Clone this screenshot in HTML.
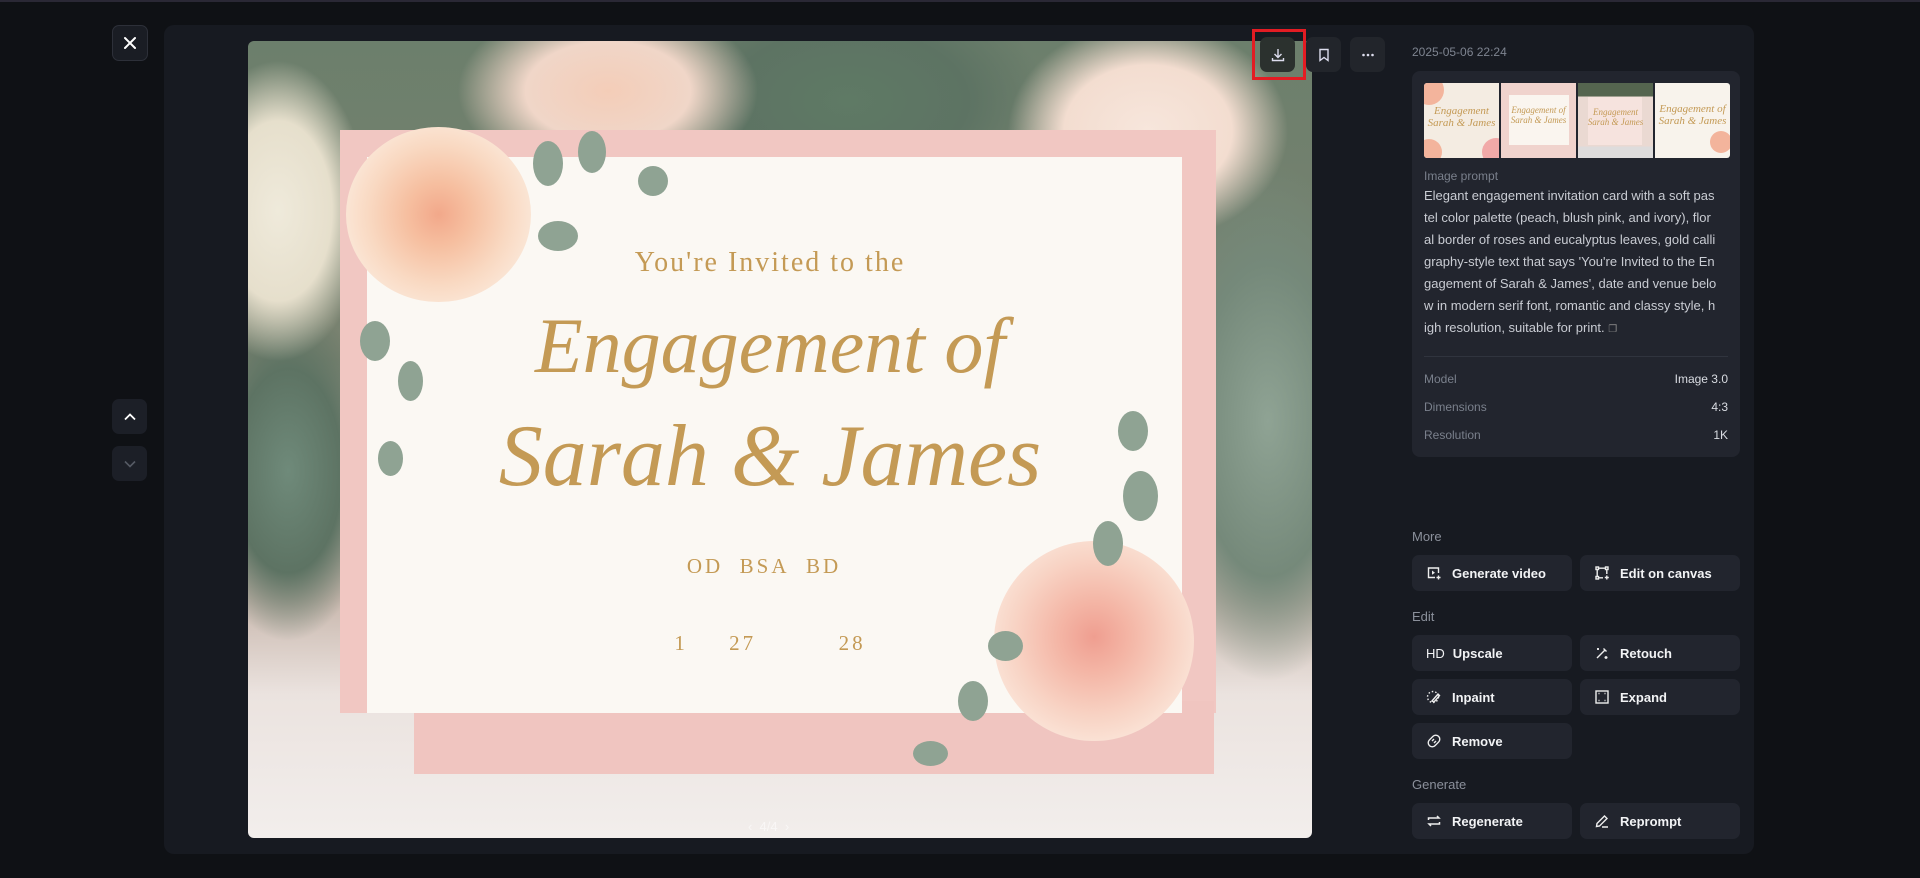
<!DOCTYPE html>
<html><head><meta charset="utf-8"><style>
*{box-sizing:border-box;margin:0;padding:0}
body{width:1920px;height:878px;background:#0f1115;font-family:"Liberation Sans",sans-serif;position:relative;overflow:hidden;color:#e6e8ec}
.topline{position:absolute;left:0;top:0;width:1920px;height:2px;background:#2a2835}
.sq{position:absolute;width:36px;height:36px;border-radius:7px;background:#1c1f27;display:flex;align-items:center;justify-content:center}
.panel{position:absolute;left:164px;top:25px;width:1590px;height:829px;background:#171a21;border-radius:10px}
.img{position:absolute;left:248px;top:41px;width:1064px;height:797px;border-radius:6px;overflow:hidden;
background:
radial-gradient(ellipse 90px 150px at 30px 170px,#efeadb 0,#e6dfcc 60%,rgba(230,223,204,0) 100%),
radial-gradient(ellipse 150px 90px at 360px 50px,#f4cdb8 0,#f0d6c8 55%,rgba(240,214,200,0) 100%),
radial-gradient(ellipse 140px 110px at 900px 90px,#f7e6dc 0,#f3ddd0 60%,rgba(243,221,208,0) 100%),
radial-gradient(ellipse 120px 260px at 1020px 380px,#8fa394 0,#75897a 60%,rgba(117,137,122,0) 100%),
radial-gradient(ellipse 200px 120px at 600px 60px,#5f7a65 0,#5d7363 60%,rgba(93,115,99,0) 100%),
radial-gradient(ellipse 90px 170px at 40px 430px,#6f8a7a 0,#5d7363 60%,rgba(93,115,99,0) 100%),
linear-gradient(180deg,#6c7f6c 0%,#7a8270 40%,#c9b8ae 70%,#ebe3df 82%,#f2eeec 100%)}
.env{position:absolute;left:92px;top:89px;width:876px;height:583px;background:#f1c7c2}
.env2{position:absolute;left:166px;top:660px;width:800px;height:73px;background:#f0c5c0}
.card{position:absolute;left:119px;top:116px;width:815px;height:556px;background:#fbf8f3}
.rose{position:absolute;border-radius:50%}
.leaf{position:absolute;border-radius:50%;background:#8fa393}
.t{position:absolute;width:100%;text-align:center;color:#c49a55}
.side{position:absolute;left:1412px}
.lbl{color:#8b909b;font-size:13px}
.btn{position:absolute;width:160px;height:36px;background:#22252e;border-radius:7px;display:flex;align-items:center;padding-left:14px;font-size:13px;font-weight:bold;color:#f2f3f5}
.btn svg{margin-right:10px}
.row{display:flex;justify-content:space-between;font-size:12px;position:absolute;left:12px;right:12px}
.row span:first-child{color:#7a808c}.row span:last-child{color:#d9dce2}
.th{width:75px;height:75px;position:relative;overflow:hidden}
.th i{position:absolute;border-radius:50%;background:#f3b49c}
.th b{position:absolute;left:0;right:0;text-align:center;color:#c49a55;font:italic 11px "Liberation Serif",serif}
</style></head><body>
<div class="topline"></div>
<div class="sq" style="left:112px;top:25px;border:1px solid #2d3039;background:#1a1d24"><svg width="16" height="16" viewBox="0 0 16 16"><path d="M3 3L13 13M13 3L3 13" stroke="#fff" stroke-width="2" stroke-linecap="round"/></svg></div>
<div class="sq" style="left:112px;top:399px;width:35px;height:35px"><svg width="16" height="16" viewBox="0 0 16 16"><path d="M3 10.5L8 5.5L13 10.5" stroke="#fff" stroke-width="1.8" fill="none"/></svg></div>
<div class="sq" style="left:112px;top:446px;width:35px;height:35px"><svg width="16" height="16" viewBox="0 0 16 16"><path d="M3 5.5L8 10.5L13 5.5" stroke="#555a64" stroke-width="1.6" fill="none"/></svg></div>
<div class="panel"></div>
<div class="img">
 <div class="env"></div>
 <div class="env2"></div>
 <div class="card"></div>
 <div class="rose" style="left:98px;top:86px;width:185px;height:175px;background:radial-gradient(circle at 50% 50%,#f2a88a 0,#f6bfa0 25%,#f9d9c2 55%,#fbeadc 80%,rgba(251,234,220,0) 100%)"></div>
 <div class="rose" style="left:746px;top:500px;width:200px;height:200px;background:radial-gradient(circle at 50% 48%,#ef9e90 0,#f4b6a6 25%,#f8d3c4 55%,#fbe8dc 80%,rgba(251,232,220,0) 100%)"></div>
 <div class="leaf" style="left:285px;top:100px;width:30px;height:45px"></div>
 <div class="leaf" style="left:330px;top:90px;width:28px;height:42px"></div>
 <div class="leaf" style="left:390px;top:125px;width:30px;height:30px"></div>
 <div class="leaf" style="left:290px;top:180px;width:40px;height:30px"></div>
 <div class="leaf" style="left:112px;top:280px;width:30px;height:40px"></div>
 <div class="leaf" style="left:150px;top:320px;width:25px;height:40px"></div>
 <div class="leaf" style="left:130px;top:400px;width:25px;height:35px"></div>
 <div class="leaf" style="left:875px;top:430px;width:35px;height:50px"></div>
 <div class="leaf" style="left:845px;top:480px;width:30px;height:45px"></div>
 <div class="leaf" style="left:710px;top:640px;width:30px;height:40px"></div>
 <div class="leaf" style="left:665px;top:700px;width:35px;height:25px"></div>
 <div class="leaf" style="left:740px;top:590px;width:35px;height:30px"></div>
 <div class="leaf" style="left:870px;top:370px;width:30px;height:40px"></div>
 <div class="t" style="top:206px;font-family:'Liberation Serif',serif;font-size:28px;letter-spacing:2px;left:-10px">You're Invited to the</div>
 <div class="t" style="top:260px;font-family:'Liberation Serif',serif;font-style:italic;font-size:78px;left:-10px">Engagement of</div>
 <div class="t" style="top:365px;font-family:'Liberation Serif',serif;font-style:italic;font-size:88px;left:-10px">Sarah &amp; James</div>
 <div class="t" style="top:513px;font-family:'Liberation Serif',serif;font-size:21px;letter-spacing:3px;left:-16px">OD&nbsp; BSA&nbsp; BD</div>
 <div class="t" style="top:590px;font-family:'Liberation Serif',serif;font-size:21px;letter-spacing:3px;left:-10px">1&nbsp;&nbsp;&nbsp;&nbsp; 27&nbsp;&nbsp;&nbsp;&nbsp;&nbsp;&nbsp;&nbsp;&nbsp;&nbsp; 28</div>
 <div style="position:absolute;left:500px;top:778px;color:rgba(255,255,255,.55);font-size:13px">‹&nbsp; 4/4 &nbsp;›</div>
</div>
<div style="position:absolute;left:1252px;top:29px;width:54px;height:51px;border:3px solid #e31c23"></div>
<div class="sq" style="left:1260px;top:37px;width:35px;height:35px;background:#2b312e"><svg width="16" height="16" viewBox="0 0 16 16" fill="none" stroke="#dde" stroke-width="1.4"><path d="M8 2V10M4.5 7L8 10.5L11.5 7M2.5 11V13.5H13.5V11"/></svg></div>
<div class="sq" style="left:1306px;top:37px;width:35px;height:35px;background:#22252b"><svg width="16" height="16" viewBox="0 0 16 16" fill="none" stroke="#dde" stroke-width="1.4"><path d="M4 2.5H12V13.5L8 10.5L4 13.5Z"/></svg></div>
<div class="sq" style="left:1350px;top:37px;width:35px;height:35px;background:#22252b"><svg width="16" height="16" viewBox="0 0 16 16" fill="#dde"><circle cx="3.5" cy="8" r="1.3"/><circle cx="8" cy="8" r="1.3"/><circle cx="12.5" cy="8" r="1.3"/></svg></div>

<div class="side lbl" style="top:45px;font-size:12px;color:#7e8490">2025-05-06 22:24</div>
<div class="side" style="top:71px;width:328px;height:386px;background:#22252e;border-radius:8px">
 <div style="position:absolute;left:12px;top:12px;display:flex;gap:2px">
  <div class="th" style="border-radius:3px 0 0 3px;background:#f4ece2"><i style="left:-10px;top:-8px;width:30px;height:30px"></i><i style="left:58px;top:55px;width:28px;height:28px;background:#f1a9a8"></i><i style="left:-8px;top:56px;width:26px;height:26px"></i><b style="top:22px">Engagement<br>Sarah &amp; James</b></div>
  <div class="th" style="background:#f0d3cd"><div style="position:absolute;left:8px;top:12px;width:60px;height:50px;background:#faf5ef"></div><b style="top:22px;font-size:9px">Engagement of<br>Sarah &amp; James</b></div>
  <div class="th" style="background:linear-gradient(#55654f 0,#55654f 18%,#ead9d2 18%,#ead9d2 85%,#dedcdc 85%)"><div style="position:absolute;left:10px;top:14px;width:54px;height:48px;background:#f6e3de"></div><b style="top:24px;font-size:9px">Engagement<br>Sarah &amp; James</b></div>
  <div class="th" style="border-radius:0 3px 3px 0;background:#f8f3ec"><i style="left:55px;top:48px;width:22px;height:22px"></i><b style="top:20px">Engagement of<br>Sarah &amp; James</b></div>
 </div>
 <div class="lbl" style="position:absolute;left:12px;top:98px;font-size:12px;color:#7a808c">Image prompt</div>
 <div style="position:absolute;left:12px;top:114px;width:310px;font-size:13px;line-height:22px;color:#c9ccd3">Elegant engagement invitation card with a soft pas<br>tel color palette (peach, blush pink, and ivory), flor<br>al border of roses and eucalyptus leaves, gold calli<br>graphy-style text that says 'You're Invited to the En<br>gagement of Sarah &amp; James', date and venue belo<br>w in modern serif font, romantic and classy style, h<br>igh resolution, suitable for print. <span style="font-size:10px;color:#888">❐</span></div>
 <div style="position:absolute;left:12px;right:12px;top:285px;height:1px;background:#30343e"></div>
 <div class="row" style="top:301px"><span>Model</span><span>Image 3.0</span></div>
 <div class="row" style="top:329px"><span>Dimensions</span><span>4:3</span></div>
 <div class="row" style="top:357px"><span>Resolution</span><span>1K</span></div>
</div>

<div class="side lbl" style="top:529px">More</div>
<div class="btn" style="left:1412px;top:555px"><svg width="16" height="16" viewBox="0 0 16 16" fill="none" stroke="#eee" stroke-width="1.4"><path d="M12.5 8V3H2.5V12.5H9"/><path d="M6 5.5L9 7.7L6 9.8Z" fill="#eee" stroke="none"/><path d="M12.5 10.5V14.5M10.5 12.5H14.5"/></svg>Generate video</div>
<div class="btn" style="left:1580px;top:555px"><svg width="16" height="16" viewBox="0 0 16 16" fill="none" stroke="#eee" stroke-width="1.4"><rect x="2" y="2" width="2.5" height="2.5"/><rect x="11.5" y="2" width="2.5" height="2.5"/><rect x="2" y="11.5" width="2.5" height="2.5"/><path d="M4.5 3.2H11.5M3.2 4.5V11.5M12.8 4.5V9M4.5 12.8H9M12.8 10.5V14.5M10.8 12.5H14.8"/></svg>Edit on canvas</div>
<div class="side lbl" style="top:609px">Edit</div>
<div class="btn" style="left:1412px;top:635px"><span style="font-weight:normal;margin-right:8px;font-size:13px">HD</span>Upscale</div>
<div class="btn" style="left:1580px;top:635px"><svg width="16" height="16" viewBox="0 0 16 16" fill="none" stroke="#eee" stroke-width="1.4"><path d="M3 13L11 5M9.5 3.5L12.5 6.5"/><path d="M4 3V5M3 4H5M12 11V14M10.5 12.5H13.5"/></svg>Retouch</div>
<div class="btn" style="left:1412px;top:679px"><svg width="16" height="16" viewBox="0 0 16 16" fill="none" stroke="#eee" stroke-width="1.4"><circle cx="7" cy="8" r="5.5" stroke-dasharray="1.5 2"/><path d="M6 12L12 5L13.5 6.5L8 13Z"/></svg>Inpaint</div>
<div class="btn" style="left:1580px;top:679px"><svg width="16" height="16" viewBox="0 0 16 16" fill="none" stroke="#eee" stroke-width="1.4"><rect x="2" y="2" width="12" height="12"/><path d="M4.5 4.5h1M10.5 4.5h1M4.5 11.5h1M10.5 11.5h1"/></svg>Expand</div>
<div class="btn" style="left:1412px;top:723px"><svg width="16" height="16" viewBox="0 0 16 16" fill="none" stroke="#eee" stroke-width="1.4"><rect x="4" y="1.5" width="8" height="13" rx="4" transform="rotate(45 8 8)"/><path d="M6 8L8 6M8 10L10 8"/></svg>Remove</div>
<div class="side lbl" style="top:777px">Generate</div>
<div class="btn" style="left:1412px;top:803px"><svg width="16" height="16" viewBox="0 0 16 16" fill="none" stroke="#eee" stroke-width="1.5"><path d="M2.5 7V5H13L11 3M13.5 9V11H3L5 13"/></svg>Regenerate</div>
<div class="btn" style="left:1580px;top:803px"><svg width="16" height="16" viewBox="0 0 16 16" fill="none" stroke="#eee" stroke-width="1.4"><path d="M2.5 13.5L3 10.5L10.5 3L13 5.5L5.5 13Z M8 14H14"/></svg>Reprompt</div>
</body></html>
